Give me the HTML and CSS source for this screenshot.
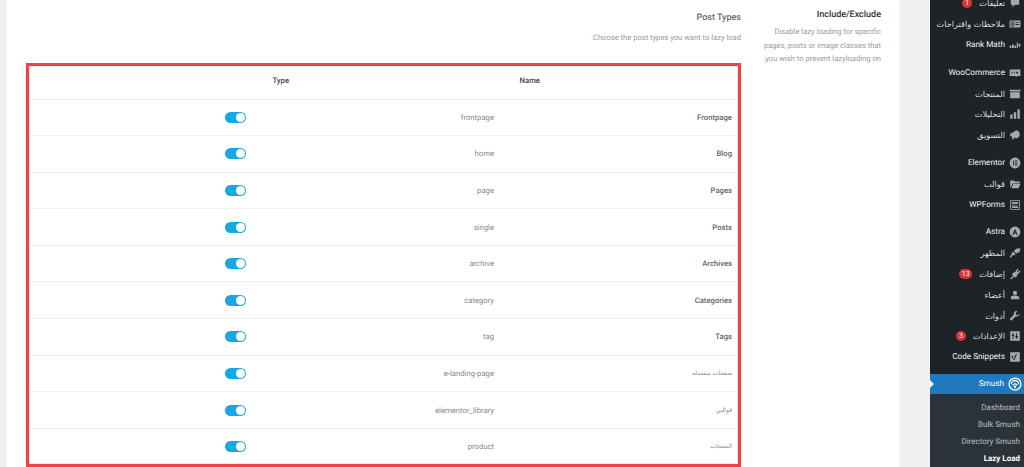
FILE: index.html
```html
<!DOCTYPE html>
<html lang="ar" dir="rtl">

<head>
    <meta charset="UTF-8">
    <meta name="viewport" content="width=device-width, initial-scale=1.0">
    <title>Smush Lazy Load</title>
    <link rel="stylesheet" href="styles.css">
</head>

<body>

    <nav class="sidebar">
        <ul class="menu">
            <li class="item"><svg class="icon" viewBox="0 0 20 20"><path d="M3 3h14v10h-7l-4 4v-4H3z"/></svg><span class="label ar">تعليقات</span><span class="badge">1</span></li>
            <li class="item"><svg class="icon" viewBox="0 0 20 20"><path fill-rule="evenodd" d="M1 4h18v12H1zM3 6v8h6V6zm8 1v1.500h6V7zm0 3v1.500h6V10zm-7-3h4v2H4zm0 4h4v2H4z"/></svg><span class="label ar">ملاحظات واقتراحات</span></li>
            <li class="item group-end"><svg class="icon" viewBox="0 0 20 20"><path d="M1 11h3v4H1zm4-2h3v6H5zm4 2h3v4H9zm4-6l2 2v8h-2zm3 3h3v5h-3z"/></svg><span class="label">Rank Math</span></li>

            <li class="item"><svg class="icon" viewBox="0 0 20 20"><path fill-rule="evenodd" d="M2 4h16a1 1 0 0 1 1 1v9a1 1 0 0 1-1 1h-5l1 2-4-2H2a1 1 0 0 1-1-1V5a1 1 0 0 1 1-1zm2 4v3h1.500V8zm4 0v3h1.500V8zm4 0v3h3V8z"/></svg><span class="label">WooCommerce</span></li>
            <li class="item"><svg class="icon" viewBox="0 0 20 20"><path d="M1 3h18v3H1zm1 4h16v10H2z"/></svg><span class="label ar">المنتجات</span></li>
            <li class="item"><svg class="icon" viewBox="0 0 20 20"><path d="M2 11h4v7H2zm6-4h4v11H8zm6-5h4v16h-4z"/></svg><span class="label ar">التحليلات</span></li>
            <li class="item group-end"><svg class="icon" viewBox="0 0 20 20"><path d="M18 9a7 7 0 0 0-7-7v1L4 7H2v5h2l1 .5V17h3v-3l3 1v1a7 7 0 0 0 7-7z"/></svg><span class="label ar">التسويق</span></li>

            <li class="item"><svg class="icon" viewBox="0 0 20 20"><path fill-rule="evenodd" d="M10 1a9 9 0 1 1 0 18 9 9 0 0 1 0-18zM7 6v8h1.500V6zm3 0v1.500h4V6zm0 3.200v1.500h4V9.200zm0 3.300V14h4v-1.500z"/></svg><span class="label">Elementor</span></li>
            <li class="item"><svg class="icon" viewBox="0 0 20 20"><path d="M2 4h6l2 2h8v3H6l-3 7H2zm5 6h12l-3 7H4z"/></svg><span class="label ar">قوالب</span></li>
            <li class="item group-end"><svg class="icon" viewBox="0 0 20 20"><path fill-rule="evenodd" d="M2 2h16v16H2zm1.500 1.500v13h13v-13zM5 5h10v3H5zm0 4h2v2H5zm3 0h2v2H8zm3 0h2v2h-2zm-6 3h10v3H5z"/></svg><span class="label">WPForms</span></li>

            <li class="item"><svg class="icon" viewBox="0 0 20 20"><path fill-rule="evenodd" d="M10 1a9 9 0 1 1 0 18 9 9 0 0 1 0-18zm0 3.500L5.500 14.500h2.200l.8-2h3l.8 2h2.200zm0 4.200l.9 2.300H9.100z"/></svg><span class="label">Astra</span></li>
            <li class="item"><svg class="icon" viewBox="0 0 20 20"><path d="M19 2l-1 6-6 3-4-4 4-4zM7 8l4 4-2 2-2-1-4 5-2-1 4-6-1-1z"/></svg><span class="label ar">المظهر</span></li>
            <li class="item"><svg class="icon" viewBox="0 0 20 20"><path d="M14 1l2 2-3 3 1 1 3-3 2 2-4 4-1 1-1 3-3 2-2-2-4 5-2-2 5-4-2-2 2-3 3-1z"/></svg><span class="label ar">إضافات</span><span class="badge wide">13</span></li>
            <li class="item"><svg class="icon" viewBox="0 0 20 20"><path d="M10 3a3.500 3.500 0 1 1 0 7 3.500 3.500 0 0 1 0-7zM3 17v-3c0-2 3-3 7-3s7 1 7 3v3z"/></svg><span class="label ar">أعضاء</span></li>
            <li class="item"><svg class="icon" viewBox="0 0 20 20"><path d="M18 6l-3 3-3-1-1-3 3-3c-3-1-6 1-6 4v2l-7 7 3 3 7-7h2c3 0 6-3 5-5z"/></svg><span class="label ar">أدوات</span></li>
            <li class="item"><svg class="icon" viewBox="0 0 20 20"><path fill-rule="evenodd" d="M2 2h16v16H2zm4 3v3H4.500v2H6v5h1.500v-5H9V8H7.500V5zm6 0v5h-1.500v2H12v3h1.500v-3H15v-2h-1.500V5z"/></svg><span class="label ar">الإعدادات</span><span class="badge">3</span></li>
            <li class="item group-end"><svg class="icon" viewBox="0 0 20 20"><path fill-rule="evenodd" d="M2 2h16v16H2zm9.500 3L7 15h1.800l4.500-10zM6.500 7L4 10l2.500 3 1-1-1.500-2 1.500-2z"/></svg><span class="label">Code Snippets</span></li>

            <li class="item current">
                <svg class="icon" viewBox="0 0 20 20"><g fill="none" stroke="#fff" stroke-width="1.800"><circle cx="10" cy="10" r="8.500"/><path d="M4.500 10.500a5.500 5.500 0 0 1 11 0M7 12a3.200 3.200 0 0 1 6 0"/></g><circle cx="10" cy="14" r="1.800" fill="#fff"/></svg>
                <span class="label">Smush</span>
            </li>
        </ul>
        <ul class="submenu">
            <li>Dashboard</li>
            <li>Bulk Smush</li>
            <li>Directory Smush</li>
            <li class="active">Lazy Load</li>
        </ul>
    </nav>

    <main class="panel">
        <div class="setting">
            <div class="setting-side">
                <h4>Include/Exclude</h4>
                <p>Disable lazy loading for specific pages, posts or image classes that you wish to prevent lazyloading on.</p>
            </div>
            <div class="setting-main">
                <h4>Post Types</h4>
                <p>Choose the post types you want to lazy load.</p>

                <div class="highlight">
                    <div class="table-head"><span>Name</span><span>Type</span></div>
                    <div class="row"><b>Frontpage</b><span>frontpage</span><i class="toggle"></i></div>
                    <div class="row"><b>Blog</b><span>home</span><i class="toggle"></i></div>
                    <div class="row"><b>Pages</b><span>page</span><i class="toggle"></i></div>
                    <div class="row"><b>Posts</b><span>single</span><i class="toggle"></i></div>
                    <div class="row"><b>Archives</b><span>archive</span><i class="toggle"></i></div>
                    <div class="row"><b>Categories</b><span>category</span><i class="toggle"></i></div>
                    <div class="row"><b>Tags</b><span>tag</span><i class="toggle"></i></div>
                    <div class="row"><b class="ar-cell">صفحات منسدلة</b><span>e-landing-page</span><i class="toggle"></i></div>
                    <div class="row"><b class="ar-cell">قوالبي</b><span>elementor_library</span><i class="toggle"></i></div>
                    <div class="row"><b class="ar-cell">المنتجات</b><span>product</span><i class="toggle"></i></div>
                </div>
            </div>
        </div>
    </main>

</body>

</html>
```

FILE: styles.css
```css
* {
    box-sizing: border-box;
}

html, body {
    height: 467px;
    overflow: hidden;
}

body {
    margin: 0;
    display: flex;
    background-color: #f0f0f1;
    font-family: Roboto, "DejaVu Sans", sans-serif;
    color: #333;
    text-rendering: geometricPrecision;
}

/* Admin menu */
.sidebar {
    width: 94px;
    flex-shrink: 0;
    background-color: #1d2327;
    font-size: 8.2px;
    color: #f0f6fc;
}

.menu, .submenu {
    list-style: none;
    margin: 0;
    padding: 0;
}

.menu {
    margin-top: -7px;
}

.item {
    position: relative;
    display: flex;
    align-items: center;
    gap: 4px;
    height: 20.8px;
    padding-right: 3px;
}

.group-end {
    margin-bottom: 7px;
}

.icon {
    width: 12px;
    height: 12px;
    flex-shrink: 0;
    fill: #a7aaad;
}

.ar {
    font-family: "DejaVu Sans", sans-serif;
    font-size: 8.2px;
    white-space: nowrap;
    color: #dcdfe2;
}

.badge {
    display: inline-block;
    min-width: 10px;
    height: 10px;
    margin-right: 3px;
    border-radius: 5px;
    background-color: #d63638;
    color: #fff;
    font-size: 7px;
    line-height: 10px;
    text-align: center;
}

.badge.wide {
    min-width: 13px;
}

.current {
    background-color: #2079bd;
    color: #fff;
    margin-top: -1px;
}

.current .icon {
    width: 14px;
    height: 14px;
    margin-right: -1px;
}

.current::after {
    content: "";
    position: absolute;
    left: 0;
    top: 6px;
    border: 4px solid transparent;
    border-left-color: #f0f0f1;
}

.submenu {
    background-color: #2c3338;
    padding: 5px 4px 0 0;
    font-size: 8px;
    color: rgba(240, 246, 252, 0.7);
    height: 80px;
}

.submenu li {
    height: 17px;
    line-height: 17px;
}

.submenu .active {
    color: #fff;
    font-weight: 700;
}

/* Settings panel */
.panel {
    flex: 1;
    margin: 0 31px 0 7px;
    background-color: #fff;
}

.setting {
    display: flex;
    padding: 0 18px 0 19px;
}

.setting-side {
    width: 140px;
    flex-shrink: 0;
    padding: 10px 0 0 20px;
}

.setting-main {
    flex: 1;
    padding-top: 13px;
}

h4 {
    margin: 0;
    font-size: 9px;
    line-height: 11px;
    font-weight: 500;
    color: #333;
}

.setting-main h4 {
    color: #666;
}

p {
    margin: 4px 0 0;
    font-size: 7.6px;
    line-height: 13.5px;
    color: #999;
}

.setting-main p {
    margin-top: 7px;
}

.highlight {
    margin-top: 18px;
    border: 3px solid #ef4248;
    box-shadow: inset 0 0 2px rgba(0, 0, 0, 0.25);
    font-size: 7.7px;
}

.table-head {
    display: flex;
    height: 33px;
    align-items: center;
    padding: 0 198px 4px 0;
    font-weight: 500;
    color: #444;
}

.table-head span:first-child {
    width: 251px;
}

.row {
    display: grid;
    grid-template-columns: 238px 248px 1fr;
    align-items: center;
    height: 36.6px;
    padding-right: 6px;
    border-top: 1px solid #f0f0f1;
    color: #888;
}

.row b {
    font-weight: 500;
    color: #666;
}

.row .ar-cell {
    font-family: "DejaVu Sans", sans-serif;
    font-size: 6px;
    font-weight: 400;
    color: #888;
}

.toggle {
    position: relative;
    display: block;
    width: 21px;
    height: 11px;
    border-radius: 6px;
    background-color: #17a8e3;
}

.toggle::after {
    content: "";
    position: absolute;
    top: 1px;
    right: 1px;
    width: 9px;
    height: 9px;
    border-radius: 50%;
    background-color: #fff;
}
```
